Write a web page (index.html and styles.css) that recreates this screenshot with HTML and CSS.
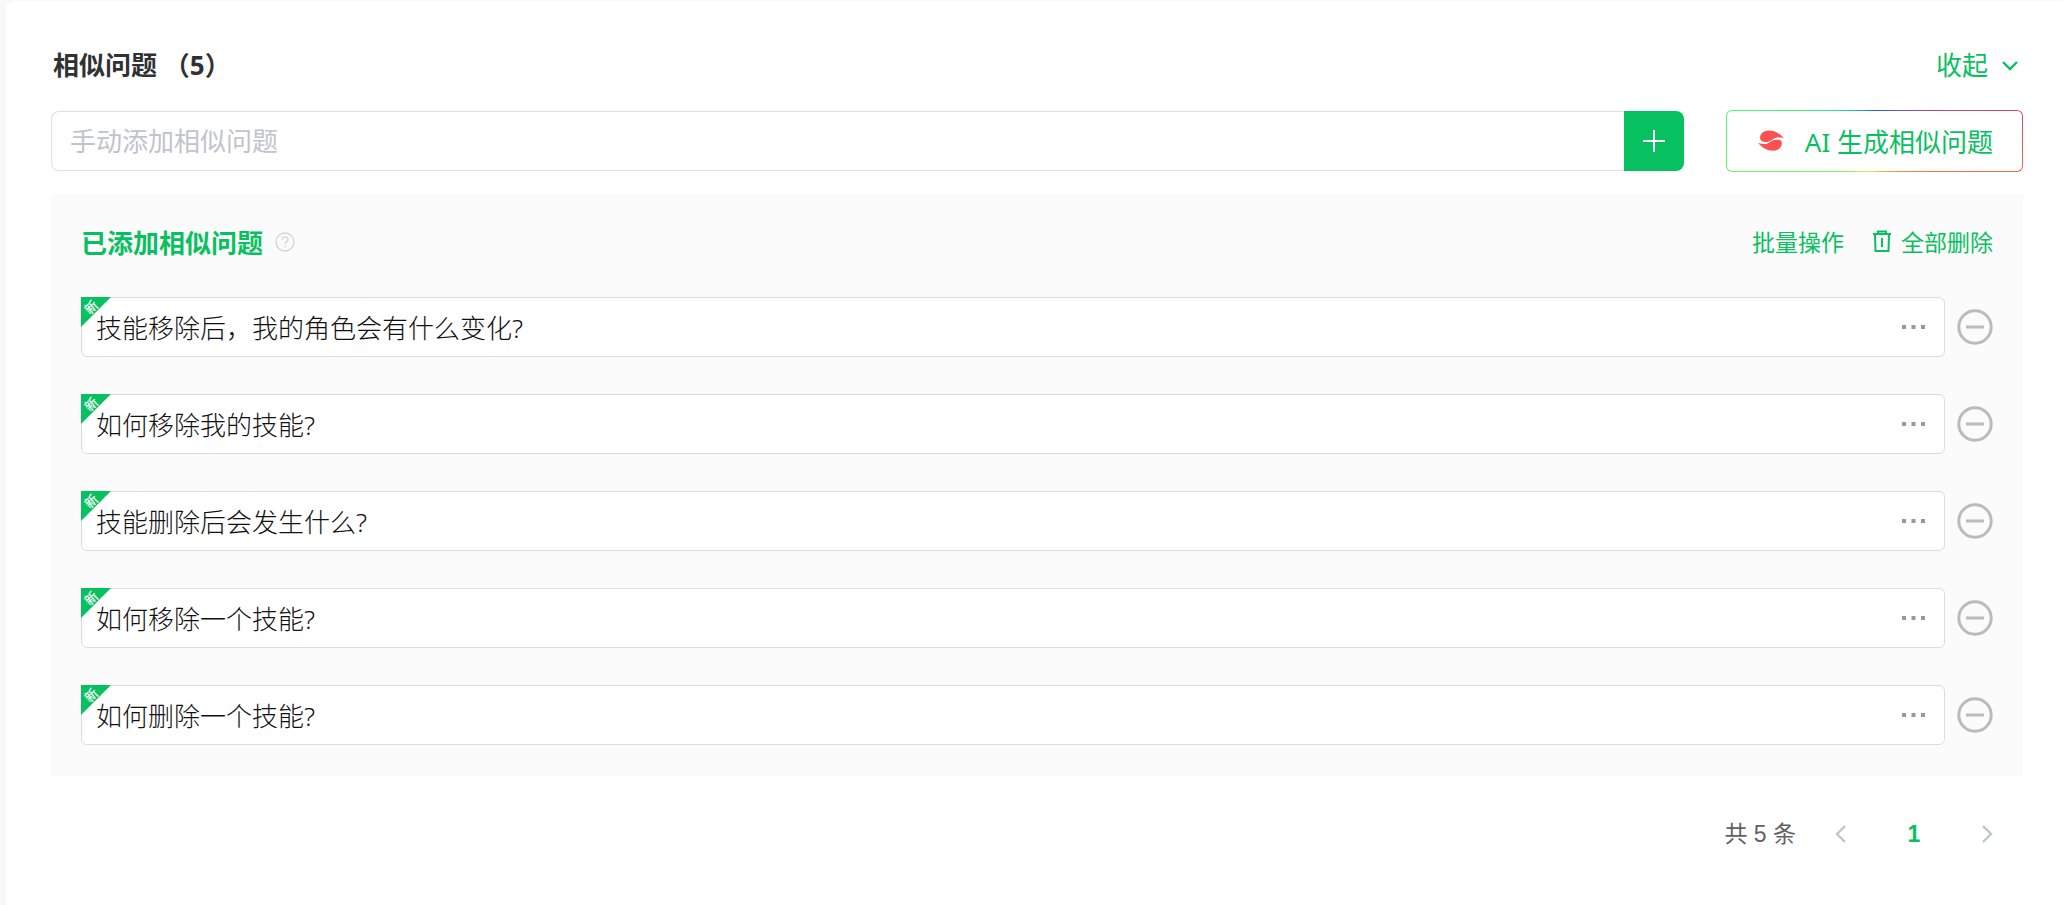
FILE: index.html
```html
<!DOCTYPE html>
<html lang="zh-CN">
<head>
    <meta charset="UTF-8">
    <meta name="viewport" content="width=device-width, initial-scale=1.0">
    <title>相似问题</title>
    <link rel="stylesheet" href="styles.css">
</head>
<body>
    <!-- icons used more than once -->
    <svg class="sprite" aria-hidden="true">
        <symbol id="dots" viewBox="0 0 24 24">
            <path d="M0 10h4v4H0zM9.500 10h4v4h-4zM19 10h4v4h-4z" fill="#999"/>
        </symbol>
        <symbol id="minus" viewBox="0 0 36 36">
            <circle cx="18" cy="18" r="16.200" fill="none" stroke="#bbb" stroke-width="3"/>
            <path d="M9 18h18" stroke="#bbb" stroke-width="3"/>
        </symbol>
    </svg>

    <main class="card">
        <div class="header">
            <h2 class="title">相似问题 （5）</h2>
            <button type="button" class="link collapse">收起
                <svg width="26" height="26" viewBox="0 0 26 26"><path d="M6 11l7 7 7-7" fill="none" stroke="currentColor" stroke-width="2.400"/></svg>
            </button>
        </div>

        <form class="add-row">
            <div class="add-box">
                <input type="text" class="add-input" placeholder="手动添加相似问题" aria-label="手动添加相似问题">
                <button type="button" class="add-btn" aria-label="添加">
                    <svg width="24" height="24" viewBox="0 0 24 24"><path d="M12 1v22M1 12h22" stroke="#fff" stroke-width="2"/></svg>
                </button>
            </div>
            <button type="button" class="ai-btn">
                <svg width="26" height="22" viewBox="0 0 26 22" fill="#fa5151">
                    <path d="M2.200 9C1.500 4 5.500.5 11 .5 17.500.5 22 4 26 8.200 22.500 7 19.500 7 17 8c-3 1.500-5 4-9 4-3 0-5.500-1-5.800-3z"/>
                    <path d="M23.700 12c.8 5-3 8.700-8.500 8.700C9 20.700 4 17.500 0 13c4 1.200 7 1.500 9.500.5 3-1.500 5-3.700 8.700-3.700 3 0 5.200.4 5.500 2.200z"/>
                </svg>
                AI 生成相似问题
            </button>
        </form>

        <section class="panel">
            <div class="panel-head">
                <h3 class="panel-title">已添加相似问题</h3>
                <svg class="help" width="20" height="20" viewBox="0 0 20 20" fill="none" stroke="#d3d3d3" stroke-width="1.300">
                    <circle cx="10" cy="10" r="9"/>
                    <path d="M7.200 7.800C7.200 4 13 4 13 7.600c0 2.200-2.900 2.300-2.900 4.600M10.100 13.600v1.600"/>
                </svg>
                <div class="actions">
                    <button type="button" class="link">批量操作</button>
                    <button type="button" class="link">
                        <svg width="20" height="22" viewBox="0 0 20 22" fill="none" stroke="currentColor" stroke-width="2"><path d="M1 4h18M6 4V1.500h8V4M3 4l.5 17h13L17 4M10 8v9"/></svg>
                        全部删除
                    </button>
                </div>
            </div>

            <ul class="list">
                <li class="item">
                    <div class="question">
                        <span class="tag"><span class="tag-text">新</span></span>
                        <input type="text" class="question-input" aria-label="相似问题1" value="技能移除后，我的角色会有什么变化?">
                        <button type="button" class="icon-btn" aria-label="更多"><svg width="24" height="24"><use href="#dots"/></svg></button>
                    </div>
                    <button type="button" class="icon-btn" aria-label="删除"><svg width="36" height="36"><use href="#minus"/></svg></button>
                </li>
                <li class="item">
                    <div class="question">
                        <span class="tag"><span class="tag-text">新</span></span>
                        <input type="text" class="question-input" aria-label="相似问题2" value="如何移除我的技能?">
                        <button type="button" class="icon-btn" aria-label="更多"><svg width="24" height="24"><use href="#dots"/></svg></button>
                    </div>
                    <button type="button" class="icon-btn" aria-label="删除"><svg width="36" height="36"><use href="#minus"/></svg></button>
                </li>
                <li class="item">
                    <div class="question">
                        <span class="tag"><span class="tag-text">新</span></span>
                        <input type="text" class="question-input" aria-label="相似问题3" value="技能删除后会发生什么?">
                        <button type="button" class="icon-btn" aria-label="更多"><svg width="24" height="24"><use href="#dots"/></svg></button>
                    </div>
                    <button type="button" class="icon-btn" aria-label="删除"><svg width="36" height="36"><use href="#minus"/></svg></button>
                </li>
                <li class="item">
                    <div class="question">
                        <span class="tag"><span class="tag-text">新</span></span>
                        <input type="text" class="question-input" aria-label="相似问题4" value="如何移除一个技能?">
                        <button type="button" class="icon-btn" aria-label="更多"><svg width="24" height="24"><use href="#dots"/></svg></button>
                    </div>
                    <button type="button" class="icon-btn" aria-label="删除"><svg width="36" height="36"><use href="#minus"/></svg></button>
                </li>
                <li class="item">
                    <div class="question">
                        <span class="tag"><span class="tag-text">新</span></span>
                        <input type="text" class="question-input" aria-label="相似问题5" value="如何删除一个技能?">
                        <button type="button" class="icon-btn" aria-label="更多"><svg width="24" height="24"><use href="#dots"/></svg></button>
                    </div>
                    <button type="button" class="icon-btn" aria-label="删除"><svg width="36" height="36"><use href="#minus"/></svg></button>
                </li>
            </ul>
        </section>

        <nav class="pager" aria-label="分页">
            <span class="total">共 5 条</span>
            <button type="button" class="icon-btn" aria-label="上一页">
                <svg width="20" height="20" viewBox="0 0 20 20"><path d="M14 2L6 10l8 8" fill="none" stroke="#c0c4cc" stroke-width="2.400"/></svg>
            </button>
            <button type="button" class="page">1</button>
            <button type="button" class="icon-btn" aria-label="下一页">
                <svg width="20" height="20" viewBox="0 0 20 20"><path d="M6 2l8 8-8 8" fill="none" stroke="#c0c4cc" stroke-width="2.400"/></svg>
            </button>
        </nav>
    </main>
</body>
</html>
```
FILE: styles.css
```css
*{
    box-sizing: border-box;
    margin: 0;
    padding: 0;
}
body{
    min-height: 100vh;
    padding: 1px 0 0 6px;
    display: flex;
    background-color: #f7f8fa;
    font-family: "Noto Sans", "Noto Sans CJK SC", sans-serif;
    font-size: 26px;
    color: #303133;
}
button, input{
    font: inherit;
    color: inherit;
    border: none;
    background: none;
}
button{
    cursor: pointer;
}
svg{
    display: block;
    flex: none;
}
.sprite{
    position: absolute;
    width: 0;
    height: 0;
}
.card{
    flex: 1;
    min-width: 0;
    padding: 39px 40px 40px 45px;
    background-color: #fff;
    border-top-left-radius: 8px;
}
.header{
    display: flex;
    align-items: center;
    justify-content: space-between;
    height: 48px;
    margin-bottom: 22px;
}
.title{
    padding-left: 2px;
    font-size: 26px;
    font-weight: 700;
}
.link{
    display: flex;
    align-items: center;
    gap: 9px;
    color: #07c160;
}

/* add row */
.add-row{
    display: flex;
    align-items: center;
    gap: 42px;
    margin-bottom: 22px;
}
.add-box{
    flex: 1;
    min-width: 0;
    display: flex;
    height: 60px;
}
.add-input{
    flex: 1;
    min-width: 0;
    padding: 0 18px;
    border: 1px solid #dcdfe6;
    border-right: none;
    border-radius: 8px 0 0 8px;
}
.add-input::placeholder{
    color: #c0c4cc;
}
.add-btn{
    display: flex;
    align-items: center;
    justify-content: center;
    width: 60px;
    background-color: #07c160;
    border-radius: 0 8px 8px 0;
}
.ai-btn{
    display: flex;
    align-items: center;
    gap: 21px;
    height: 62px;
    padding: 0 29px 0 31px;
    border: 1px solid transparent;
    border-radius: 6px;
    background:
        linear-gradient(#fff, #fff) padding-box,
        conic-gradient(#1f5eff, #a04c8c 60deg, #d8495f 80deg, #f2694a 100deg, #f58a3c 140deg, #f5e63c 190deg, #7df55a 230deg, #4dff6e 280deg, #1fe58a 310deg, #1f5eff) border-box;
    color: #07c160;
    white-space: nowrap;
}

/* list */
.panel{
    padding: 24px 30px 31px;
    background-color: #fbfbfb;
}
.panel-head{
    display: flex;
    align-items: center;
    height: 48px;
    margin-bottom: 31px;
}
.panel-title{
    font-size: 26px;
    font-weight: 700;
    color: #07c160;
}
.help{
    margin-left: 12px;
}
.actions{
    display: flex;
    gap: 28px;
    margin-left: auto;
    padding-bottom: 2px;
    font-size: 23px;
}
.list{
    display: grid;
    gap: 37px;
    list-style: none;
}
.item{
    display: flex;
    align-items: center;
    gap: 12px;
}
.question{
    position: relative;
    flex: 1;
    min-width: 0;
    display: flex;
    align-items: center;
    height: 60px;
    padding: 0 18px 0 14px;
    border: 1px solid #dcdcdc;
    border-radius: 6px;
    background-color: #fff;
}
.question-input{
    flex: 1;
    min-width: 0;
    height: 100%;
    font-weight: 300;
    color: #111;
}
.icon-btn{
    display: flex;
}
.tag{
    position: absolute;
    top: -1px;
    left: -1px;
    width: 30px;
    height: 30px;
    background-color: #07c160;
    clip-path: polygon(0 0, 100% 0, 0 100%);
}
.tag-text{
    display: block;
    width: 20px;
    height: 20px;
    line-height: 20px;
    text-align: center;
    font-size: 13px;
    font-weight: 500;
    color: #fff;
    transform: rotate(-45deg);
}

/* pagination */
.pager{
    display: flex;
    align-items: center;
    justify-content: flex-end;
    margin-top: 38px;
    padding-right: 26px;
    font-family: "Liberation Sans", "Noto Sans CJK SC", sans-serif;
    font-size: 23px;
    line-height: 40px;
}
.total{
    margin-right: 35px;
    color: #606266;
}
.page{
    width: 126px;
    font-weight: 700;
    color: #07c160;
}
```
